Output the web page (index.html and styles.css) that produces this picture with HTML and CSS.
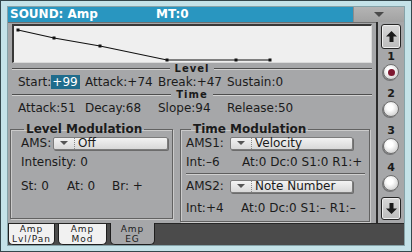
FILE: index.html
```html
<!DOCTYPE html>
<html lang="en">
<head>
    <meta charset="UTF-8">
    <meta name="viewport" content="width=device-width, initial-scale=1.0">
    <title>Sound: Amp</title>
    <link rel="stylesheet" href="styles.css">
</head>
<body>
    <div class="device">
        <div class="frame">
            <div class="title-bar">
                <div class="title">
                    <span class="title-name">SOUND: Amp</span>
                    <span>MT:0</span>
                </div>
                <div class="menu-btn"><span class="menu-arrow"></span></div>
            </div>

            <div class="page">
                <!-- envelope graph -->
                <div class="graph">
                    <svg width="357" height="36" viewBox="0 0 357 36">
                        <polyline points="4,4 40,12 86,20 153,34 256,34" fill="none" stroke="#111" stroke-width="1.2"/>
                        <rect x="2.5" y="2.5" width="3" height="3" fill="#111"/>
                        <rect x="38.5" y="10.5" width="3" height="3" fill="#111"/>
                        <rect x="84.5" y="18.5" width="3" height="3" fill="#111"/>
                        <rect x="151.5" y="32.5" width="3" height="3" fill="#111"/>
                        <rect x="220.5" y="32.5" width="3" height="3" fill="#111"/>
                        <rect x="254.5" y="32.5" width="3" height="3" fill="#111"/>
                    </svg>
                </div>

                <div class="section-head"><span class="rule"></span><b>Level</b><span class="rule"></span></div>
                <div class="params">
                    <div>Start:<span class="selected">+99</span></div>
                    <div>Attack:+74</div>
                    <div>Break:+47</div>
                    <div>Sustain:0</div>
                </div>

                <div class="section-head"><span class="rule"></span><b>Time</b><span class="rule"></span></div>
                <div class="params">
                    <div>Attack:51</div>
                    <div>Decay:68</div>
                    <div>Slope:94</div>
                    <div>Release:50</div>
                </div>

                <div class="mods">
                    <fieldset class="box box-level">
                        <legend>Level Modulation</legend>
                        <div class="row row-ams">
                            <span class="lbl lbl-ams">AMS:</span>
                            <div class="dropdown dd-level">
                                <span class="dd-arrow"></span>
                                <span class="dd-value">Off</span>
                            </div>
                        </div>
                        <div class="row row-tall">Intensity: 0</div>
                        <div class="row row-tall">
                            <span class="cell-st">St: 0</span>
                            <span class="cell-at">At: 0</span>
                            <span>Br: +</span>
                        </div>
                    </fieldset>

                    <fieldset class="box box-time">
                        <legend>Time Modulation</legend>
                        <div class="row row-ams">
                            <span class="lbl lbl-ams1">AMS1:</span>
                            <div class="dropdown dd-time">
                                <span class="dd-arrow"></span>
                                <span class="dd-value">Velocity</span>
                            </div>
                        </div>
                        <div class="row row-int">
                            <span class="cell-int">Int:–6</span>
                            <span>At:0 Dc:0 S1:0 R1:+</span>
                        </div>
                        <div class="divider"></div>
                        <div class="row row-ams2">
                            <span class="lbl lbl-ams1">AMS2:</span>
                            <div class="dropdown dd-time">
                                <span class="dd-arrow"></span>
                                <span class="dd-value">Note Number</span>
                            </div>
                        </div>
                        <div class="row row-int2">
                            <span class="cell-int cell-int2">Int:+4</span>
                            <span>At:0 Dc:0 S1:– R1:–</span>
                        </div>
                    </fieldset>
                </div>
            </div>

            <div class="sidebar">
                <div class="side-btn">
                    <svg width="11" height="11" viewBox="0 0 11 11"><path d="M5.5 0 L11 5.5 L7.5 5.5 L7.5 11 L3.5 11 L3.5 5.5 L0 5.5 Z" fill="#1c1c1c"/></svg>
                </div>
                <div class="slot"><span class="slot-num">1</span><span class="radio on"><span class="dot"></span></span></div>
                <div class="slot"><span class="slot-num">2</span><span class="radio"></span></div>
                <div class="slot"><span class="slot-num">3</span><span class="radio"></span></div>
                <div class="slot"><span class="slot-num">4</span><span class="radio"></span></div>
                <div class="side-btn down">
                    <svg width="11" height="11" viewBox="0 0 11 11"><path d="M5.5 11 L11 5.5 L7.5 5.5 L7.5 0 L3.5 0 L3.5 5.5 L0 5.5 Z" fill="#1c1c1c"/></svg>
                </div>
            </div>

            <div class="tabs">
                <div class="tab tab-lvl"><span>Amp</span><span>Lvl/Pan</span></div>
                <div class="tab tab-mod"><span>Amp</span><span>Mod</span></div>
                <div class="tab tab-eg active"><span>Amp</span><span>EG</span></div>
            </div>
        </div>
    </div>
</body>
</html>
```

FILE: styles.css
```css
* {
    box-sizing: border-box;
}
body {
    margin: 0;
    background: #c4e2e8;
    font-family: "DejaVu Sans", sans-serif;
    font-size: 12px;
    color: #1b1b1b;
}
.device {
    width: 412px;
    height: 252px;
    border: 1px solid #34474c;
    padding: 6px 7px;
    background: #c4e2e8;
}
.frame {
    width: 396px;
    height: 238px;
    display: grid;
    grid-template-columns: 368px 28px;
    grid-template-rows: 15px 201px 22px;
    background: #a6a7a9;
    box-shadow: 0 0 0 1px #86a3a9;
}

/* title bar */
.title-bar {
    grid-column: 1 / 3;
    display: flex;
}
.title {
    flex: 1;
    display: flex;
    align-items: center;
    padding-left: 2px;
    background: #2996c0;
    color: #fff;
    font-weight: bold;
    line-height: 15px;
}
.title-name {
    width: 146px;
}
.menu-btn {
    width: 51px;
    display: flex;
    align-items: center;
    justify-content: center;
    background: linear-gradient(#b4b4b4, #a2a2a2);
    border-left: 1px solid #8c8c8c;
}
.menu-arrow {
    width: 0;
    height: 0;
    border-left: 5px solid transparent;
    border-right: 5px solid transparent;
    border-top: 5px solid #4a4a4a;
}

/* main page */
.page {
    grid-row: 2;
    grid-column: 1;
    display: flex;
    flex-direction: column;
    border-top: 1px solid #6e6e6e;
}
.graph {
    margin: 1px 4px 0 4px;
    height: 39px;
    border-top: 2px solid #383838;
    border-left: 2px solid #383838;
    border-right: 1px solid #dadada;
    border-bottom: 1px solid #dadada;
    background: #efefef;
}
.graph svg {
    display: block;
}
.section-head {
    height: 12px;
    display: flex;
    align-items: center;
    gap: 5px;
    padding: 0 4px;
    font-size: 10px;
    line-height: 12px;
    letter-spacing: 1px;
}
.rule {
    flex: 1;
    height: 2px;
    border-top: 1px solid #4e4e4e;
    border-bottom: 1px solid #d2d2d2;
}
.params {
    height: 14px;
    display: grid;
    grid-template-columns: 67px 73px 69px auto;
    align-items: center;
    padding-left: 10px;
    line-height: 14px;
    white-space: nowrap;
}
.selected {
    display: inline-block;
    height: 14px;
    padding: 0 2px 0 1px;
    background: #1f6c8c;
    color: #fff;
}

/* modulation boxes */
.mods {
    display: flex;
    align-items: flex-start;
    gap: 7px;
    margin-top: 8px;
    padding: 0 6px 0 2px;
}
.box {
    margin: 0;
    min-width: 0;
    border: 1px solid #626262;
    box-shadow: inset 1px 1px 0 #cbcbcb, 1px 1px 0 #cbcbcb;
    padding: 0;
}
.box legend {
    padding: 0 2px;
    font-weight: bold;
    line-height: 12px;
}
.box-level {
    width: 163px;
    height: 96px;
    padding-left: 10px;
}
.box-level legend {
    margin-left: 3px;
}
.box-time {
    flex: 1;
    height: 99px;
    padding-left: 5px;
}
.box-time legend {
    margin-left: 5px;
}
.row {
    display: flex;
    align-items: center;
    white-space: nowrap;
}
.row-ams {
    height: 14px;
    margin-top: 1px;
}
.row-tall {
    height: 24px;
}
.row-int {
    height: 23px;
}
.row-ams2,
.row-int2 {
    height: 22px;
}
.lbl-ams {
    width: 32px;
}
.lbl-ams1 {
    width: 44px;
}
.cell-st {
    width: 46px;
}
.cell-at {
    width: 45px;
}
.cell-int {
    width: 56px;
}
.cell-int2 {
    width: 55px;
}
.divider {
    height: 2px;
    margin-right: 4px;
    border-top: 1px solid #5e5e5e;
    border-bottom: 1px solid #d0d0d0;
}
.dropdown {
    display: flex;
    height: 13px;
    border: 1px solid #7c7c7c;
    border-radius: 2px;
    background: linear-gradient(#f3f3f3, #d8d8d8);
    box-shadow: 1px 1px 0 #6c6c6c;
    line-height: 11px;
}
.dd-level {
    width: 115px;
}
.dd-time {
    width: 123px;
}
.dd-arrow {
    width: 20px;
    display: flex;
    align-items: center;
    justify-content: center;
}
.dd-arrow::before {
    content: "";
    border-left: 4px solid transparent;
    border-right: 4px solid transparent;
    border-top: 4px solid #555;
}
.dd-value {
    border-left: 1px dotted #8a8a8a;
    padding-left: 3px;
}

/* right side selector */
.sidebar {
    grid-row: 2;
    grid-column: 2;
    display: flex;
    flex-direction: column;
    align-items: center;
    border-left: 2px solid #2b2b2b;
}
.side-btn {
    width: 20px;
    height: 25px;
    margin-top: 2px;
    display: flex;
    align-items: center;
    justify-content: center;
    border: 1px solid #262626;
    border-radius: 3px;
    background: linear-gradient(#d8d8d8, #bcbcbc);
    box-shadow: inset 0 0 0 1px #eeeeee;
}
.side-btn.down {
    height: 23px;
    margin-top: 0;
}
.slot {
    height: 37px;
    display: flex;
    flex-direction: column;
    align-items: center;
}
.slot-num {
    height: 14px;
    margin-top: 1px;
    font-size: 11px;
    font-weight: bold;
    line-height: 14px;
}
.radio {
    width: 16px;
    height: 16px;
    display: flex;
    align-items: center;
    justify-content: center;
    border: 1px solid #6f6f6f;
    border-radius: 50%;
    background: radial-gradient(circle at 42% 38%, #ffffff 25%, #bdbdbd 100%);
    box-shadow: -1px 1px 0 rgba(0, 0, 0, 0.3);
}
.radio .dot {
    width: 7px;
    height: 7px;
    border-radius: 50%;
    background: #7e1830;
}

/* bottom tabs */
.tabs {
    grid-row: 3;
    grid-column: 1 / 3;
    display: flex;
    gap: 3px;
    background: #4b4b4b;
    border-top: 1px solid #262626;
}
.tab {
    height: 21px;
    display: flex;
    flex-direction: column;
    align-items: center;
    border: 1px solid #1e1e1e;
    border-top: none;
    border-radius: 0 0 5px 5px;
    background: #f1f1f1;
    font-size: 9px;
    line-height: 10px;
    letter-spacing: 1px;
}
.tab-lvl {
    width: 47px;
}
.tab-mod {
    width: 49px;
}
.tab-eg {
    width: 45px;
}
.tab.active {
    height: 22px;
    margin-top: -1px;
    padding-top: 1px;
    background: #a6a7a9;
}
```
